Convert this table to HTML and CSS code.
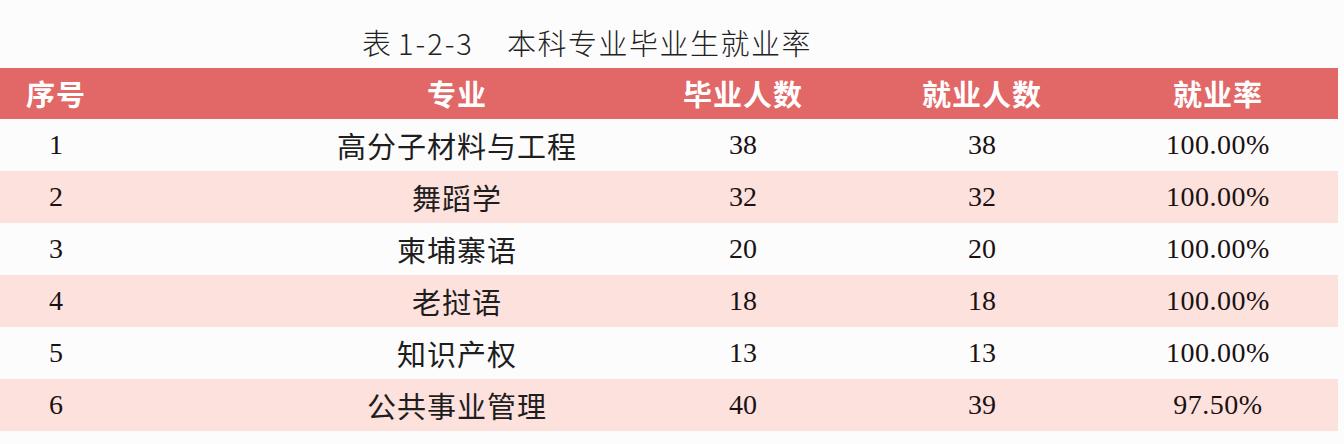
FILE: index.html
```html
<!DOCTYPE html>
<html lang="zh-CN">
<head>
<meta charset="utf-8">
<title>本科专业毕业生就业率</title>
<link rel="stylesheet" href="styles.css">
</head>
<body>
<div class="page">
  <div class="caption"><span class="cap-mark">表</span><span class="cap-no">1-2-3</span><span class="cap-text">本科专业毕业生就业率</span></div>
  <div class="table">
    <div class="row head">
      <div class="cell">序号</div>
      <div class="cell major">专业</div>
      <div class="cell">毕业人数</div>
      <div class="cell">就业人数</div>
      <div class="cell">就业率</div>
    </div>
    <div class="row">
      <div class="cell num">1</div>
      <div class="cell major">高分子材料与工程</div>
      <div class="cell num">38</div>
      <div class="cell num">38</div>
      <div class="cell num rate">100.00%</div>
    </div>
    <div class="row alt">
      <div class="cell num">2</div>
      <div class="cell major">舞蹈学</div>
      <div class="cell num">32</div>
      <div class="cell num">32</div>
      <div class="cell num rate">100.00%</div>
    </div>
    <div class="row">
      <div class="cell num">3</div>
      <div class="cell major">柬埔寨语</div>
      <div class="cell num">20</div>
      <div class="cell num">20</div>
      <div class="cell num rate">100.00%</div>
    </div>
    <div class="row alt">
      <div class="cell num">4</div>
      <div class="cell major">老挝语</div>
      <div class="cell num">18</div>
      <div class="cell num">18</div>
      <div class="cell num rate">100.00%</div>
    </div>
    <div class="row">
      <div class="cell num">5</div>
      <div class="cell major">知识产权</div>
      <div class="cell num">13</div>
      <div class="cell num">13</div>
      <div class="cell num rate">100.00%</div>
    </div>
    <div class="row alt">
      <div class="cell num">6</div>
      <div class="cell major">公共事业管理</div>
      <div class="cell num">40</div>
      <div class="cell num">39</div>
      <div class="cell num rate">97.50%</div>
    </div>
  </div>
</div>
</body>
</html>
```
FILE: styles.css
```css
html, body {
  margin: 0;
  padding: 0;
  background: #fdfcfd;
}
body {
  font-family: "Noto Sans CJK SC", "Noto Sans", sans-serif;
  color: #1e1e1e;
  width: 1344px;
  height: 444px;
  overflow: hidden;
}
.caption {
  height: 68px;
  box-sizing: border-box;
  display: flex;
  align-items: center;
  padding-left: 362px;
  padding-top: 16px;
  font-size: 29px;
  font-weight: 300;
  color: #222;
  line-height: 1;
}
.cap-no {
  margin-left: 7px;
  letter-spacing: 2px;
}
.cap-text {
  margin-left: 33px;
  letter-spacing: 1.5px;
}
.table {
  width: 1338px;
}
.row {
  display: grid;
  grid-template-columns: 112px 508px 246px 232px 240px;
  height: 52px;
  align-items: center;
}
.row.head {
  height: 51px;
  background: #e26767;
  color: #ffffff;
  font-weight: 700;
  font-size: 29px;
  letter-spacing: 1px;
}
.row.alt {
  background: #fde1dd;
}
.cell {
  text-align: center;
  line-height: 1;
}
.major {
  padding-left: 182px;
  font-size: 29px;
  letter-spacing: 1px;
}
.num {
  font-family: "Liberation Serif", "Noto Sans CJK SC", serif;
  font-size: 28px;
  color: #1a1212;
}
.rate {
  letter-spacing: 0.5px;
}
```
